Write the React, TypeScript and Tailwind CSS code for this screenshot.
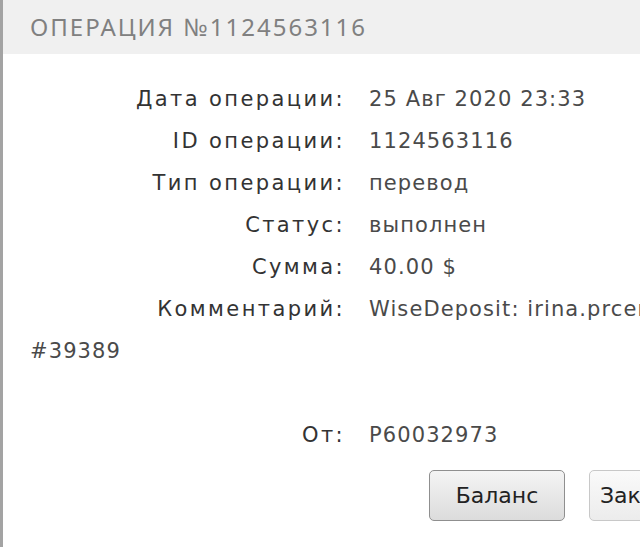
import React from "react";

const rows: [string, string][] = [
  ["Дата операции:", "25 Авг 2020 23:33"],
  ["ID операции:", "1124563116"],
  ["Тип операции:", "перевод"],
  ["Статус:", "выполнен"],
  ["Сумма:", "40.00 $"],
  ["Комментарий:", "WiseDeposit: irina.prcenko@mail.ru"],
];

const Row = ({ label, value }: { label: string; value: string }) => (
  <div className="flex h-[42px] items-center">
    <div className="w-[342px] shrink-0 text-right tracking-[2.4px] text-[#333]">{label}</div>
    <div className="shrink-0 whitespace-nowrap pl-[24px] tracking-[1.1px] text-[#4a4a4a]">{value}</div>
  </div>
);

export default function App() {
  return (
    <div className="h-[547px] w-[640px] overflow-hidden border-l-[3px] border-[#a3a3a3] bg-white">
      <div
        className="flex h-[54px] items-center bg-[#f0f0f0] pl-[27px] text-[24px] tracking-[2px] text-[#808080]"
        style={{ fontFamily: '"Noto Sans", sans-serif' }}
      >
        ОПЕРАЦИЯ №1124563116
      </div>

      <div
        className="pt-[25px] text-[21px]"
        style={{ fontFamily: '"DejaVu Sans", sans-serif' }}
      >
        {rows.map(([l, v]) => (
          <Row key={l} label={l} value={v} />
        ))}
        <div className="flex h-[42px] items-center pl-[27px] tracking-[1.1px] text-[#4a4a4a]">#39389</div>
        <div className="h-[42px]" />
        <Row label="От:" value="P60032973" />

        <div className="flex gap-[24px] pl-[426px] pt-[13px]">
          <button className="h-[51px] w-[136px] shrink-0 rounded-[5px] border border-[#8f8f8f] bg-gradient-to-b from-[#f4f4f4] to-[#dcdcdc] text-[22px] text-[#222]">
            Баланс
          </button>
          <button className="h-[51px] w-[136px] shrink-0 rounded-[5px] border border-[#c8c8c8] bg-gradient-to-b from-[#fafafa] to-[#ececec] pl-[10px] text-left text-[22px] text-[#222]">
            Закрыть
          </button>
        </div>
      </div>
    </div>
  );
}
